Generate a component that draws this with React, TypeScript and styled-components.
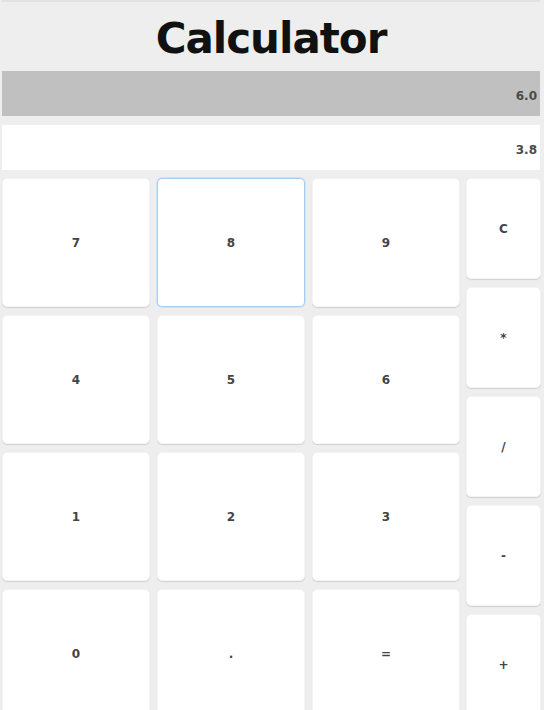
import React from 'react'
import styled, { createGlobalStyle } from 'styled-components'

const GlobalStyle = createGlobalStyle`
  html, body {
    margin: 0;
    padding: 0;
    background: #ffffff;
    overflow: hidden;
  }
  body {
    font-family: 'DejaVu Sans', 'Liberation Sans', sans-serif;
  }
`

const digits = ['7', '8', '9', '4', '5', '6', '1', '2', '3', '0', '.', '=']
const ops = ['C', '*', '/', '-', '+']

const App: React.FC = () => {
  return (
    <Page>
      <GlobalStyle />
      <Header>Calculator</Header>
      <Display $tone="dark">6.0</Display>
      <Display $tone="light">3.8</Display>
      <Keypad>
        <DigitGrid>
          {digits.map((d) => (
            <Key key={d} $focused={d === '8'}>
              {d}
            </Key>
          ))}
        </DigitGrid>
        <OpColumn>
          {ops.map((o) => (
            <OpKey key={o}>{o}</OpKey>
          ))}
        </OpColumn>
      </Keypad>
    </Page>
  )
}

export default App

const Page = styled.div`
  width: 544px;
  height: 710px;
  overflow: hidden;
  display: flex;
  flex-direction: column;
  background: #eeeeee;
  padding-left: 2px;
  box-sizing: border-box;
`

const Header = styled.div`
  height: 71px;
  flex-shrink: 0;
  box-sizing: border-box;
  border-top: 2px solid #e2e2e2;
  display: flex;
  align-items: center;
  justify-content: center;
  padding-top: 4px;
  font-size: 42px;
  font-weight: bold;
  color: #111111;
  letter-spacing: -1px;
  margin-right: 4px;
`

const Display = styled.div<{ $tone: 'dark' | 'light' }>`
  height: 45px;
  flex-shrink: 0;
  width: 538px;
  box-sizing: border-box;
  margin-bottom: ${(p) => (p.$tone === 'dark' ? '9px' : '8px')};
  background: ${(p) => (p.$tone === 'dark' ? '#c0c0c0' : '#ffffff')};
  display: flex;
  align-items: center;
  justify-content: flex-end;
  padding: 5px 3px 0 0;
  font-size: 12px;
  font-weight: bold;
  color: #4a4a4a;
`

const Keypad = styled.div`
  display: flex;
  gap: 6px;
  align-items: flex-start;
`

const DigitGrid = styled.div`
  display: grid;
  grid-template-columns: repeat(3, 148px);
  grid-auto-rows: 129px;
  column-gap: 7px;
  row-gap: 8px;
`

const OpColumn = styled.div`
  display: flex;
  flex-direction: column;
  gap: 8px;
  width: 75px;
`

const Key = styled.div<{ $focused?: boolean }>`
  background: #ffffff;
  border-radius: 5px;
  box-sizing: border-box;
  border: 1px solid ${(p) => (p.$focused ? '#a6cdf2' : '#f4f4f4')};
  box-shadow: ${(p) =>
    p.$focused ? '0 0 0 1px #cfe3f7' : '0 1px 1px rgba(0, 0, 0, 0.12)'};
  display: flex;
  align-items: center;
  justify-content: center;
  font-size: 12px;
  font-weight: bold;
  color: #444444;
`

const OpKey = styled(Key)`
  height: 101px;
  flex-shrink: 0;
`
